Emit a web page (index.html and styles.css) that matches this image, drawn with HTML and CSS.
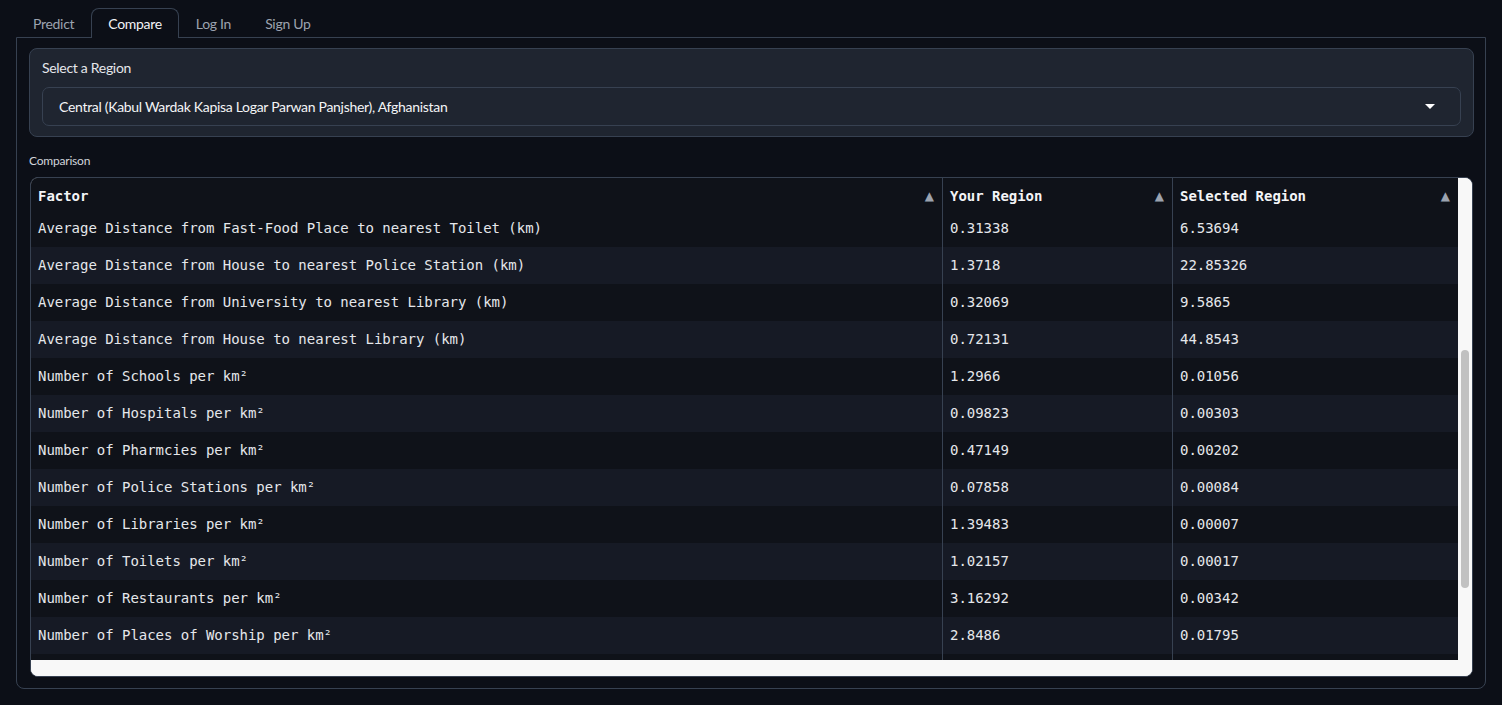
FILE: index.html
```html
<!DOCTYPE html>
<html lang="en">
<head>
<meta charset="utf-8">
<title>Compare</title>
<link rel="stylesheet" href="styles.css">
</head>
<body>
<div class="app">
  <nav class="tabs">
    <button class="tab">Predict</button>
    <button class="tab active">Compare</button>
    <button class="tab">Log In</button>
    <button class="tab">Sign Up</button>
  </nav>
  <section class="panel">
    <div class="block">
      <div class="block-label">Select a Region</div>
      <div class="dropdown">
        <span class="dropdown-value">Central (Kabul Wardak Kapisa Logar Parwan Panjsher), Afghanistan</span>
        <svg class="caret" width="10" height="6" viewBox="0 0 10 6"><path d="M0 0 H10 L5 5 Z" fill="#ffffff"/></svg>
      </div>
    </div>
    <div class="table-label">Comparison</div>
    <div class="table-frame">
      <div class="table-main">
        <div class="viewport">
          <div class="row head">
            <div class="cell"><span>Factor</span><span class="sort">▲</span></div>
            <div class="cell"><span>Your Region</span><span class="sort">▲</span></div>
            <div class="cell"><span>Selected Region</span><span class="sort">▲</span></div>
          </div>
          <div class="row odd"><div class="cell">Average Distance from Fast-Food Place to nearest Toilet (km)</div><div class="cell">0.31338</div><div class="cell">6.53694</div></div>
          <div class="row even"><div class="cell">Average Distance from House to nearest Police Station (km)</div><div class="cell">1.3718</div><div class="cell">22.85326</div></div>
          <div class="row odd"><div class="cell">Average Distance from University to nearest Library (km)</div><div class="cell">0.32069</div><div class="cell">9.5865</div></div>
          <div class="row even"><div class="cell">Average Distance from House to nearest Library (km)</div><div class="cell">0.72131</div><div class="cell">44.8543</div></div>
          <div class="row odd"><div class="cell">Number of Schools per km²</div><div class="cell">1.2966</div><div class="cell">0.01056</div></div>
          <div class="row even"><div class="cell">Number of Hospitals per km²</div><div class="cell">0.09823</div><div class="cell">0.00303</div></div>
          <div class="row odd"><div class="cell">Number of Pharmcies per km²</div><div class="cell">0.47149</div><div class="cell">0.00202</div></div>
          <div class="row even"><div class="cell">Number of Police Stations per km²</div><div class="cell">0.07858</div><div class="cell">0.00084</div></div>
          <div class="row odd"><div class="cell">Number of Libraries per km²</div><div class="cell">1.39483</div><div class="cell">0.00007</div></div>
          <div class="row even"><div class="cell">Number of Toilets per km²</div><div class="cell">1.02157</div><div class="cell">0.00017</div></div>
          <div class="row odd"><div class="cell">Number of Restaurants per km²</div><div class="cell">3.16292</div><div class="cell">0.00342</div></div>
          <div class="row even"><div class="cell">Number of Places of Worship per km²</div><div class="cell">2.8486</div><div class="cell">0.01795</div></div>
          <div class="row odd"><div class="cell"></div><div class="cell"></div><div class="cell"></div></div>
        </div>
        <div class="vscroll"><div class="thumb"></div></div>
      </div>
      <div class="hscroll"></div>
    </div>
  </section>
</div>
</body>
</html>
```
FILE: styles.css
```css
html, body {
  margin: 0;
  padding: 0;
  background: #0c0f17;
}
body {
  font-family: Lato, "Noto Sans", sans-serif;
  color: #e5e7eb;
}
.app {
  padding: 8px 16px 17px 16px;
}
.tabs {
  display: flex;
  height: 29px;
}
.tab {
  background: transparent;
  border: 1px solid transparent;
  border-bottom: none;
  color: #9ca3af;
  font-family: inherit;
  font-size: 14px;
  letter-spacing: -0.3px;
  padding: 0 16px 0 16px;
  height: 30px;
  border-radius: 8px 8px 0 0;
  cursor: pointer;
}
.tab.active {
  color: #f3f4f6;
  border-color: #374151;
  background: #0c0f17;
  position: relative;
  z-index: 1;
}
.panel {
  border: 1px solid #374151;
  border-radius: 0 0 8px 8px;
  padding: 10px 11px 11px 12px;
  height: 629px;
}
.block {
  background: #1f2530;
  border: 1px solid #374151;
  border-radius: 8px;
  padding: 9px 12px 10px 12px;
}
.block-label {
  font-size: 14px;
  letter-spacing: -0.3px;
  line-height: 20px;
  color: #e5e7eb;
  margin-bottom: 9px;
}
.dropdown {
  display: flex;
  align-items: center;
  justify-content: space-between;
  height: 37px;
  border: 1px solid #374151;
  border-radius: 7px;
  background: #1f2530;
  padding: 0 25px 0 16px;
}
.dropdown-value {
  font-size: 14px;
  letter-spacing: -0.3px;
  color: #f3f4f6;
}
.caret {
  display: block;
}
.table-label {
  font-size: 12px;
  letter-spacing: -0.2px;
  color: #d1d5db;
  margin: 16px 0 8px 0;
  line-height: 16px;
}
.table-frame {
  margin: 0 1px 0 1px;
  border: 1px solid #374151;
  border-radius: 8px;
  background: #f8f8f8;
  overflow: hidden;
  display: flex;
  flex-direction: column;
}
.table-main {
  display: flex;
}
.viewport {
  height: 482px;
  overflow: hidden;
  width: 1427px;
  background: #0f1219;
  font-family: "DejaVu Sans Mono", "Liberation Mono", monospace;
  font-size: 14px;
  letter-spacing: -0.03px;
}
.row {
  display: grid;
  grid-template-columns: 911px 230px 286px;
  height: 37px;
}
.row.head {
  height: 32px;
  background: #0f1219;
  font-weight: bold;
}
.row.odd { background: #0f1219; }
.row.even { background: #161a25; }
.cell {
  display: flex;
  align-items: center;
  justify-content: space-between;
  padding: 0 8px 2px 7px;
  color: #e5e7eb;
  white-space: nowrap;
  overflow: hidden;
}
.cell + .cell {
  border-left: 1px solid #374151;
}
.row.head .cell {
  color: #f3f4f6;
  padding-top: 4px;
  padding-bottom: 0;
}
.sort {
  font-family: "DejaVu Sans", sans-serif;
  font-size: 12px;
  color: #9ca3af;
  font-weight: normal;
}
.vscroll {
  width: 14px;
  background: #f8f8f8;
  padding-top: 172px;
  box-sizing: border-box;
}
.thumb {
  width: 8px;
  height: 238px;
  margin-left: 3px;
  background: #c1c1c1;
  border-radius: 4px;
}
.hscroll {
  height: 16px;
  background: #f8f8f8;
}
```
